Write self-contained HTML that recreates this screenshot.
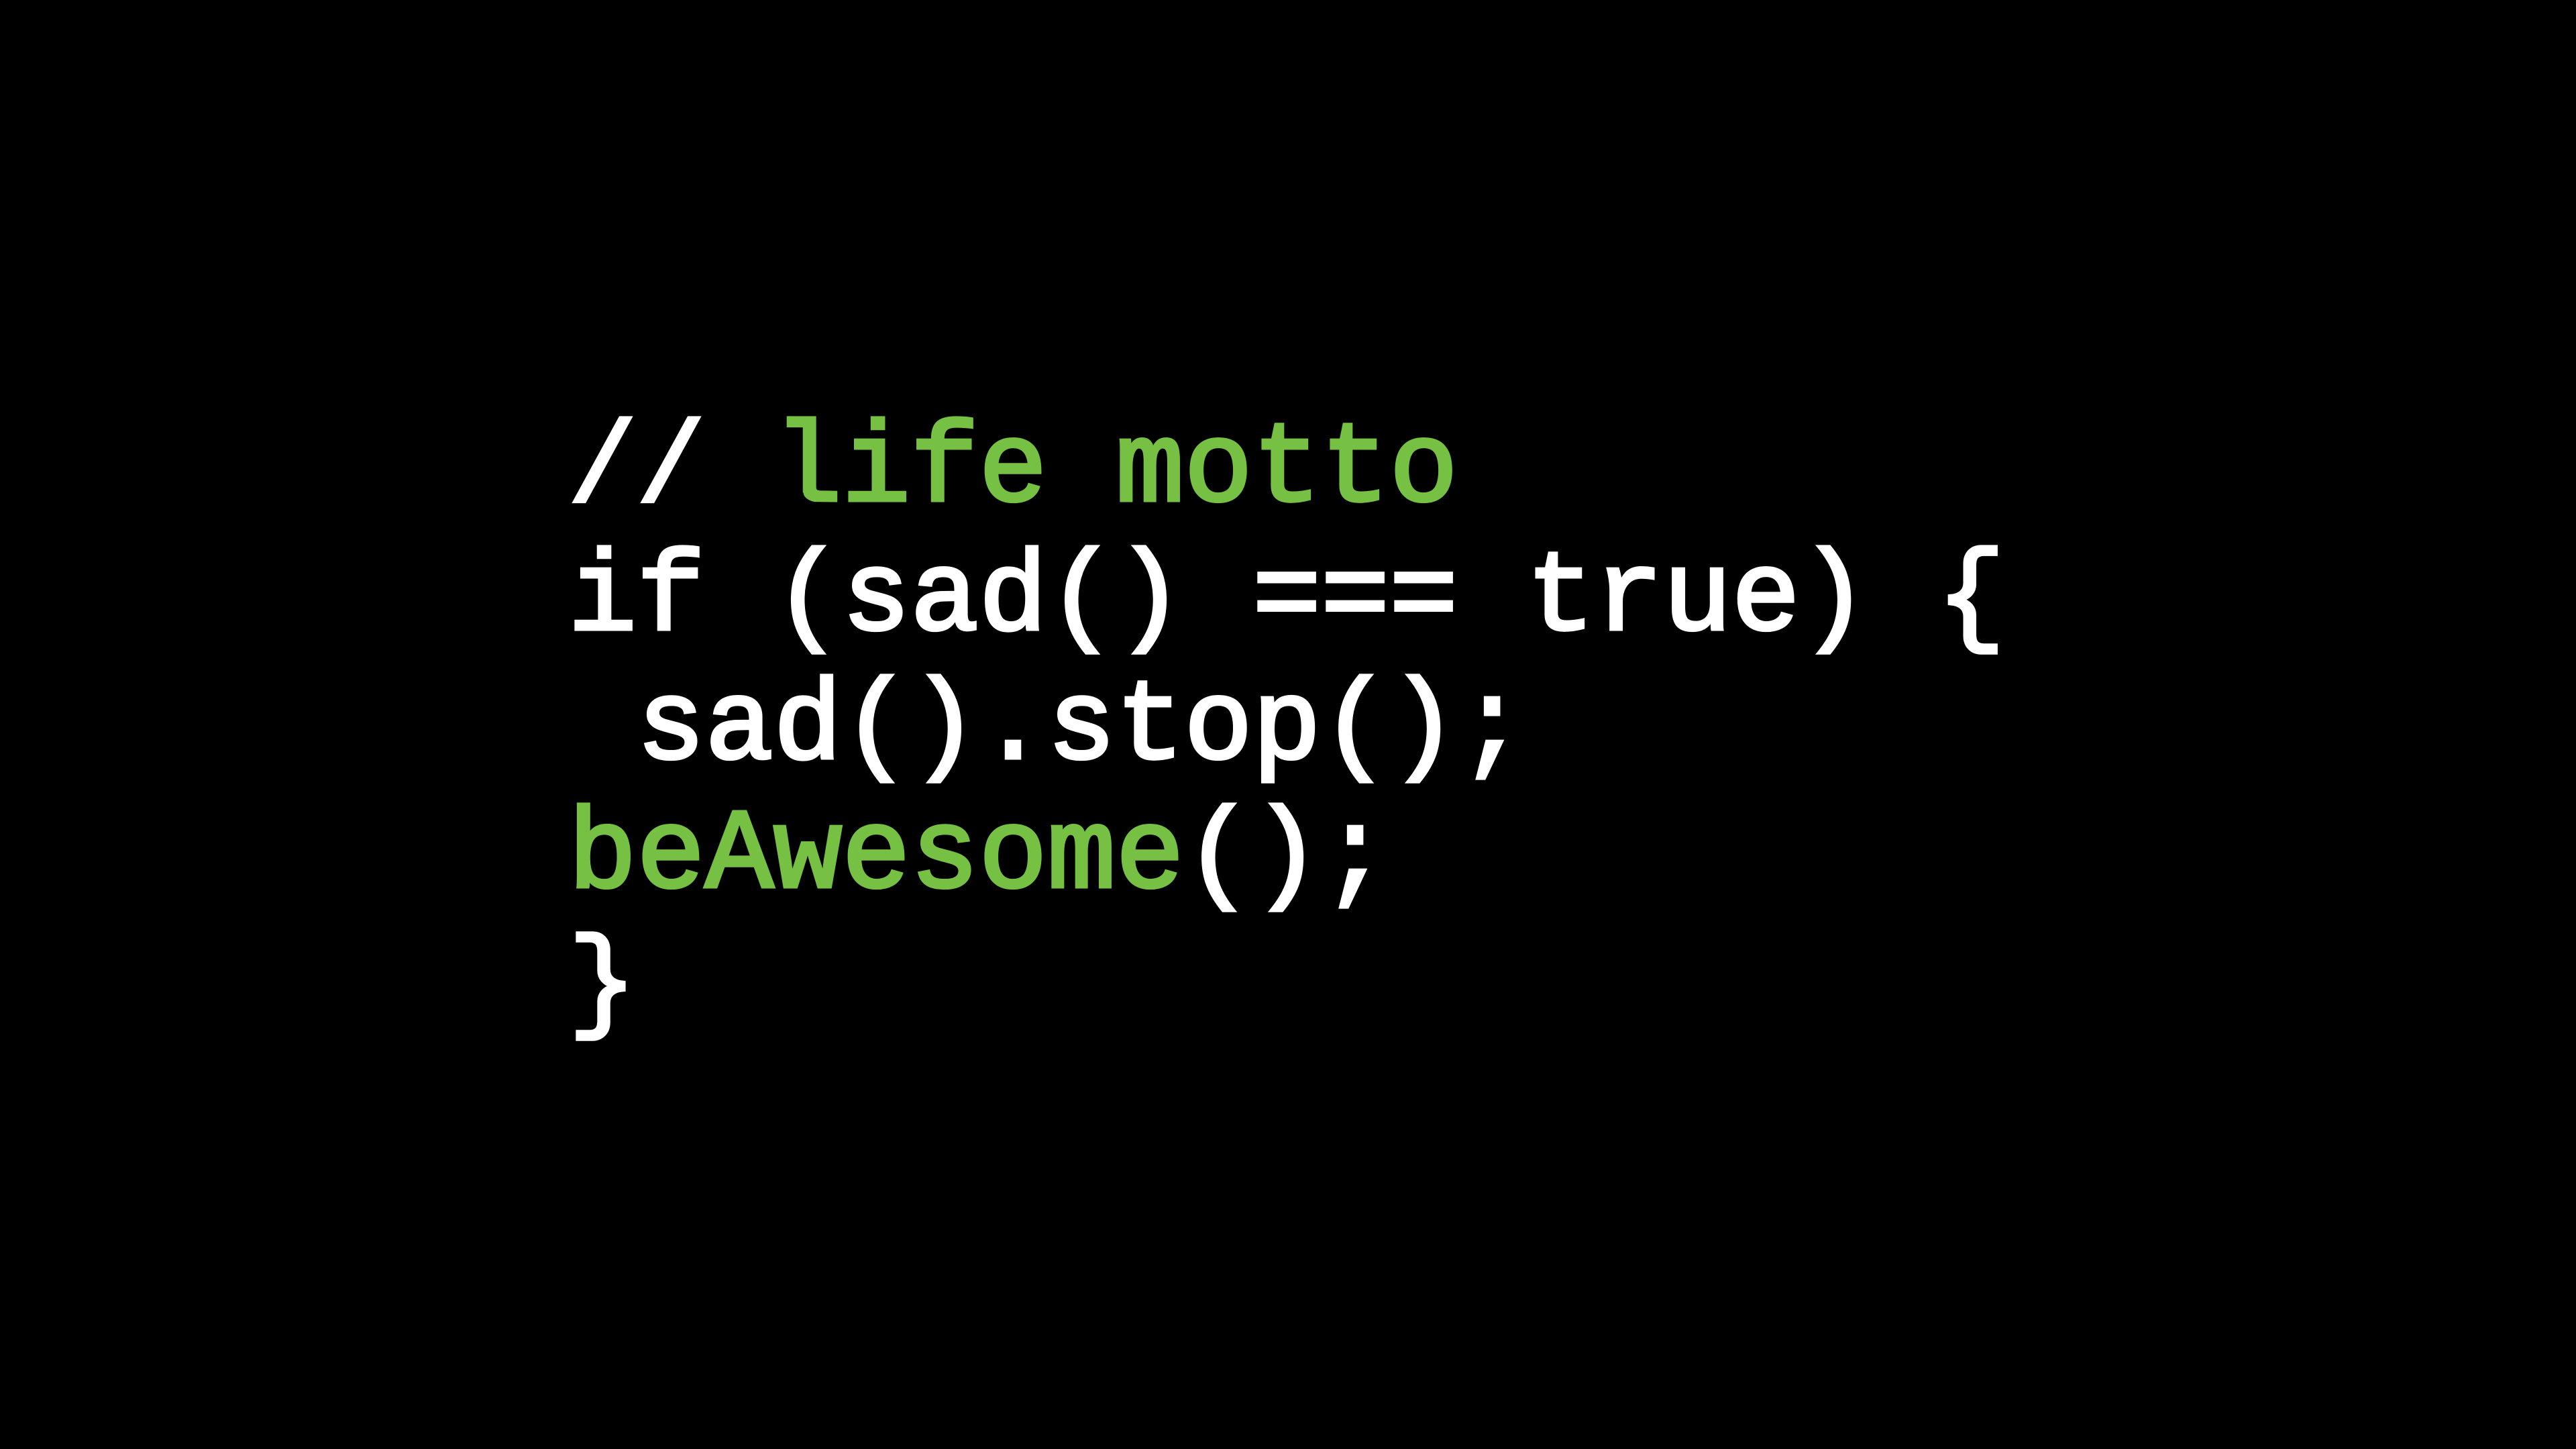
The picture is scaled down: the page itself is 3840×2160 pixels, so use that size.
<!DOCTYPE html>
<html><head><style>
html,body{margin:0;padding:0;background:#000;width:3840px;height:2160px;overflow:hidden}
pre{position:absolute;left:847px;top:6px;margin:0;font-family:"Liberation Mono",monospace;font-size:170px;font-weight:normal;-webkit-text-stroke:5px currentColor;color:#fff;line-height:192px}
.g{color:#76c043}
.l{position:absolute;left:0;white-space:pre}
</style></head><body>
<pre>
<span class="l" style="top:600px">// <span class="g">life motto</span></span>
<span class="l" style="top:792px">if (sad() === true) {</span>
<span class="l" style="top:984px"> sad().stop();</span>
<span class="l" style="top:1176px"><span class="g">beAwesome</span>();</span>
<span class="l" style="top:1368px">}</span>
</pre>
</body></html>
